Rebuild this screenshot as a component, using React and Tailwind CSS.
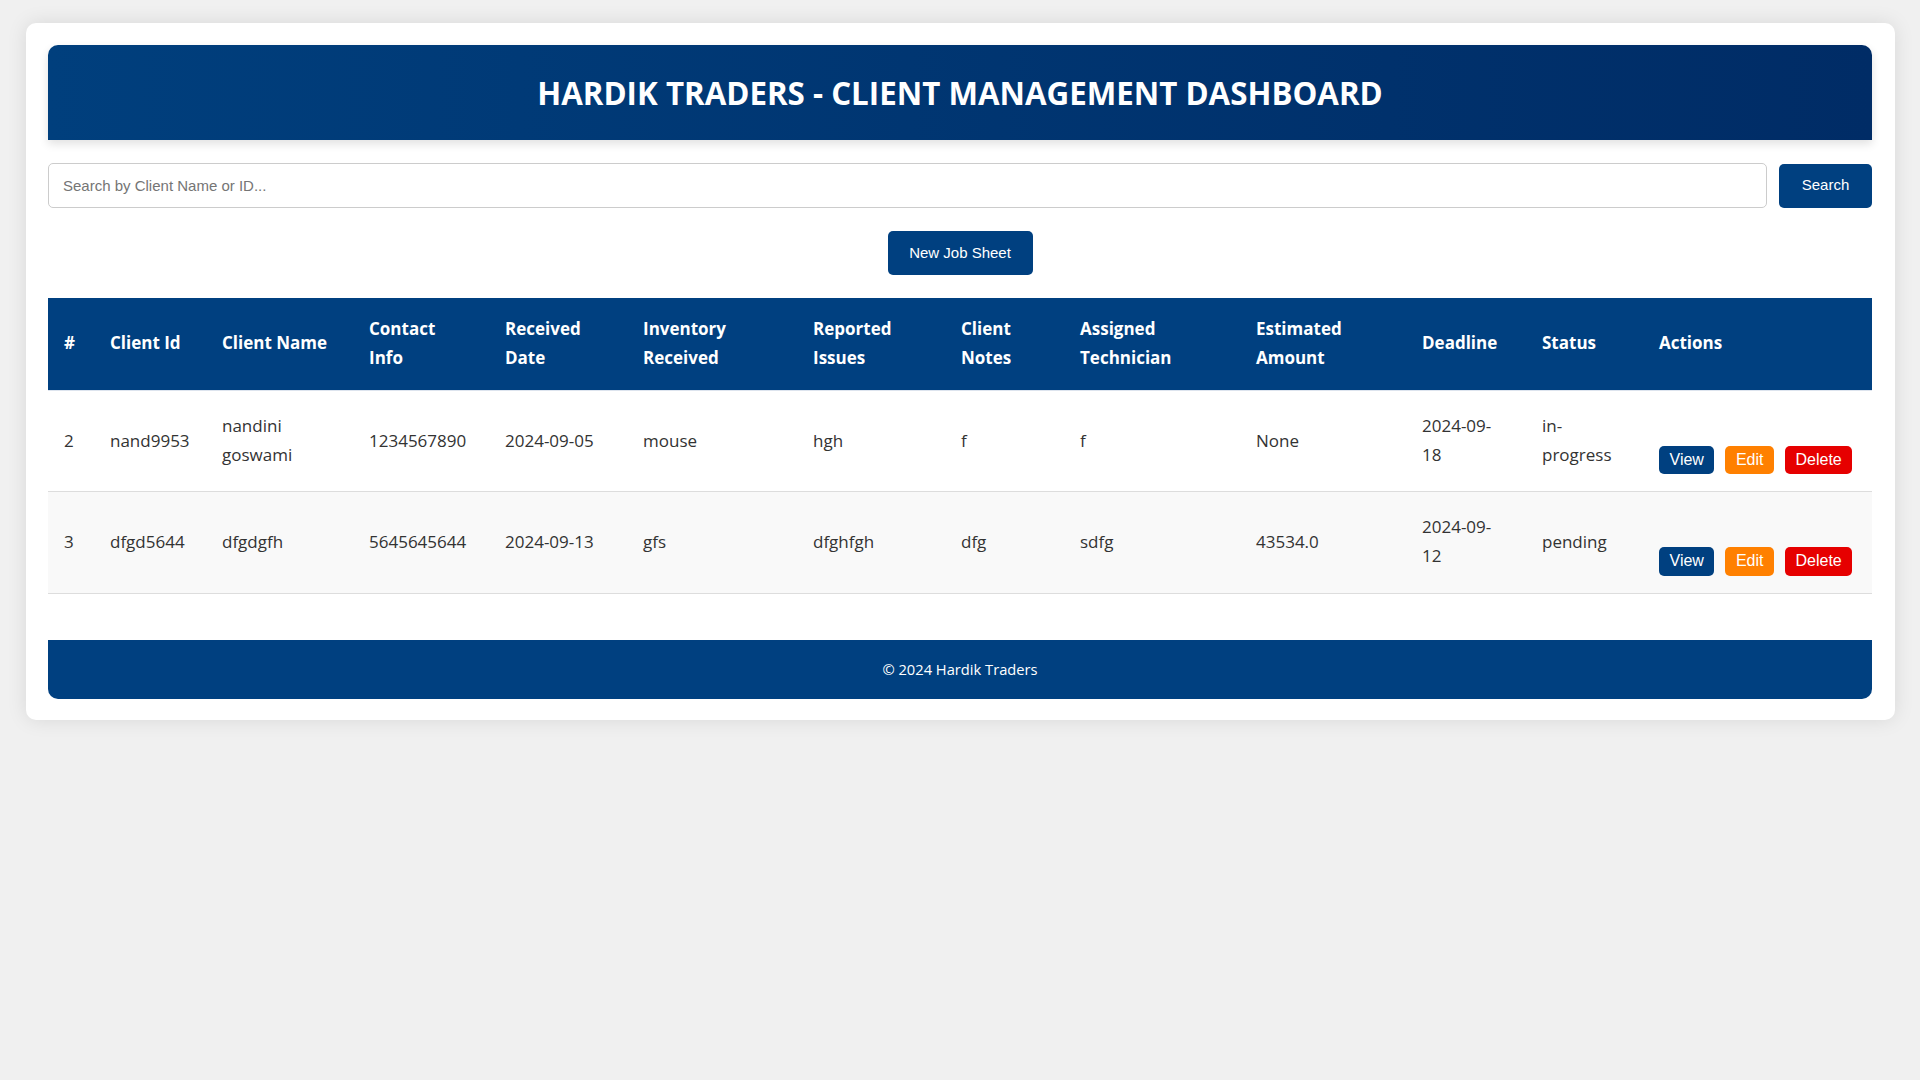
export default function App() {
  const cols = [46, 112, 147, 136, 138, 170, 148, 119, 176, 166, 120, 117, 229];
  const headers = [
    "#",
    "Client Id",
    "Client Name",
    "Contact Info",
    "Received Date",
    "Inventory Received",
    "Reported Issues",
    "Client Notes",
    "Assigned Technician",
    "Estimated Amount",
    "Deadline",
    "Status",
    "Actions",
  ];
  const rows = [
    ["2", "nand9953", "nandini goswami", "1234567890", "2024-09-05", "mouse", "hgh", "f", "f", "None", "2024-09-18", "in-progress"],
    ["3", "dfgd5644", "dfgdgfh", "5645645644", "2024-09-13", "gfs", "dfghfgh", "dfg", "sdfg", "43534.0", "2024-09-12", "pending"],
  ];
  const btn = "text-white text-[16px] leading-[18.4px] px-[10.5px] py-[5px] rounded-[5px]";
  return (
    <div className="min-h-screen bg-[#f0f0f0] pt-[23px] pl-[26px] pr-[25px] font-['Open_Sans',sans-serif]">
      <div className="bg-white rounded-[10px] shadow-[0_0_20px_rgba(0,0,0,0.1)] pl-[22px] pr-[23px] pt-[22px] pb-[21px]">
        <header className="h-[95px] rounded-t-[10px] bg-gradient-to-r from-[#003f7d] to-[#002c66] shadow-[0_4px_10px_rgba(0,0,0,0.12)] flex items-center justify-center">
          <h1 className="text-white font-bold text-[31.3px] leading-none pt-[3px]">HARDIK TRADERS - CLIENT MANAGEMENT DASHBOARD</h1>
        </header>

        <div className="mt-[23px] flex items-center gap-[12px] font-['Liberation_Sans',Arial,sans-serif]">
          <input
            type="text"
            placeholder="Search by Client Name or ID..."
            className="flex-1 h-[45px] border border-[#ccc] rounded-[5px] px-[14px] text-[15px] text-[#333] placeholder:text-[#757575] outline-none"
          />
          <button className="w-[93px] h-[44px] bg-[#004080] text-white text-[15px] rounded-[5px]">Search</button>
        </div>

        <div className="mt-[23px] flex justify-center font-['Liberation_Sans',Arial,sans-serif]">
          <button className="w-[145px] h-[44px] bg-[#004080] text-white text-[15px] rounded-[5px]">New Job Sheet</button>
        </div>

        <table className="mt-[23px] w-full table-fixed border-collapse text-[17px] leading-[1.7]">
          <colgroup>
            {cols.map((w, i) => (
              <col key={i} style={{ width: w }} />
            ))}
          </colgroup>
          <thead>
            <tr className="bg-[#004080]">
              {headers.map((h) => (
                <th key={h} className="text-left text-white font-bold pl-[16px] pr-[24px] py-[17px] border-b border-[#dde4ee] align-middle">
                  {h}
                </th>
              ))}
            </tr>
          </thead>
          <tbody>
            {rows.map((r, ri) => (
              <tr key={ri} className={ri === 1 ? "bg-[#f9f9f9]" : "bg-white"}>
                {r.map((c, ci) => (
                  <td key={ci} className="text-[#333] pl-[16px] pr-[24px] py-[21.3px] border-b border-[#ddd] align-middle">
                    {c}
                  </td>
                ))}
                <td className="pl-[16px] pr-[8px] pb-[17px] border-b border-[#ddd] align-bottom">
                  <div className="flex gap-[11px] font-['Liberation_Sans',Arial,sans-serif]">
                    <button className={`${btn} bg-[#004080]`}>View</button>
                    <button className={`${btn} bg-[#ff8000]`}>Edit</button>
                    <button className={`${btn} bg-[#e60000]`}>Delete</button>
                  </div>
                </td>
              </tr>
            ))}
          </tbody>
        </table>

        <footer className="mt-[46px] h-[59px] bg-[#004080] rounded-b-[10px] flex items-center justify-center">
          <p className="text-white text-[14.7px]">© 2024 Hardik Traders</p>
        </footer>
      </div>
    </div>
  );
}
